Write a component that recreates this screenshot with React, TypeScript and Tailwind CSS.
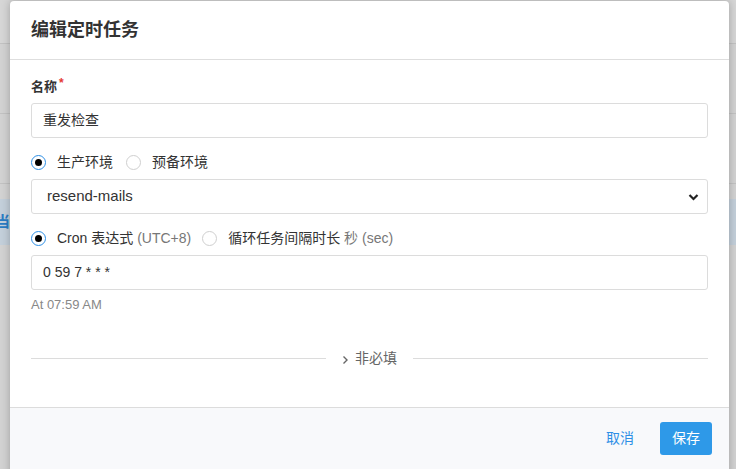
import React from "react";

const font = { fontFamily: '"Liberation Sans", "Noto Sans CJK SC", sans-serif' };

// little radio, checked ones get a blue ring and black dot
const Radio = ({ checked, label }: { checked?: boolean; label: React.ReactNode }) => (
  <label className="flex items-center h-5">
    <span
      className={`flex items-center justify-center w-[15px] h-[15px] rounded-full border bg-white ${
        checked ? "border-[#2d8fe6]" : "border-[#cfcfcf]"
      }`}
    >
      {checked && <span className="w-[7px] h-[7px] rounded-full bg-black" />}
    </span>
    <span className="ml-[11px] text-[14px] text-[#333]">{label}</span>
  </label>
);

const App = () => {
  return (
    <div className="relative w-[736px] h-[469px] overflow-hidden bg-[#d2d2d2]" style={font}>
      {/* page behind the overlay */}
      <div className="flex flex-col">
        <div className="h-[44px] border-b border-[#c2c2c2] bg-[#d6d6d6]" />
        <div className="h-[70px] border-b border-[#c2c2c2]" />
        <div className="h-[70px] border-b border-[#c2c2c2]" />
        <div className="h-[15px]" />
        <div className="h-[46px] bg-[#c3cfda] flex items-center text-[15px] text-[#2a7cc4] font-bold">
          <span className="-ml-[5px]">当</span>
        </div>
      </div>

      {/* modal */}
      <div className="absolute left-[10px] top-[1px] w-[719px] h-[480px] bg-white rounded-[4px] shadow-[0_0_8px_rgba(0,0,0,0.25)] flex flex-col">
        <div className="h-[59px] flex items-center px-[21px] border-b border-[#dedede]">
          <h2 className="text-[18px] font-bold text-[#333]">编辑定时任务</h2>
        </div>

        <div className="px-[21px] pt-[17px] pb-[38px]">
          <div className="h-5 flex items-center text-[13px] font-semibold text-[#333]">
            名称<span className="text-[#e53935] text-[12px] -mt-[8px] ml-[2px]">*</span>
          </div>
          <div className="mt-[6px] h-[35px] flex items-center px-[11px] border border-[#dcdcdc] rounded-[3px] text-[14px] text-[#333]">
            重发检查
          </div>

          <div className="mt-[14px] flex items-center gap-[13px]">
            <Radio checked label="生产环境" />
            <Radio label="预备环境" />
          </div>
          <div className="mt-[7px] h-[35px] flex items-center justify-between pl-[15px] pr-[8px] border border-[#dcdcdc] rounded-[3px] text-[15px] text-[#333]">
            <span>resend-mails</span>
            <svg width="11" height="8" viewBox="0 0 11 8" fill="none">
              <path d="M1.5 2 L5.5 6 L9.5 2" stroke="#222" strokeWidth="2.2" />
            </svg>
          </div>

          <div className="mt-[14px] flex items-center gap-[11px]">
            <Radio
              checked
              label={
                <>
                  Cron 表达式 <span className="text-[#777]">(UTC+8)</span>
                </>
              }
            />
            <Radio
              label={
                <>
                  循环任务间隔时长 <span className="text-[#777]">秒 (sec)</span>
                </>
              }
            />
          </div>
          <div className="mt-[7px] h-[35px] flex items-center px-[11px] border border-[#dcdcdc] rounded-[3px] text-[14px] text-[#333]">
            0 59 7 * * *
          </div>
          <div className="mt-[6px] h-[18px] flex items-center text-[13px] text-[#888]">At 07:59 AM</div>

          <div className="mt-[34px] flex items-center">
            <div className="flex-1 border-t border-[#dcdcdc]" />
            <div className="mx-[16px] flex items-center text-[14px] text-[#666]">
              <svg width="7" height="10" viewBox="0 0 7 10" fill="none" className="mr-[6px] mt-[2px]">
                <path d="M1.5 1.5 L5 5 L1.5 8.5" stroke="#666" strokeWidth="1.4" />
              </svg>
              非必填
            </div>
            <div className="flex-1 border-t border-[#dcdcdc]" />
          </div>
        </div>

        <div className="flex-1 bg-[#f8f9fb] border-t border-[#dcdcdc] flex items-start justify-end pt-[14px] pr-[17px] gap-[26px]">
          <button className="h-[33px] text-[14px] text-[#2d8fe6]">取消</button>
          <button className="h-[33px] px-[12px] rounded-[3px] bg-[#2e99e8] text-white text-[14px]">保存</button>
        </div>
      </div>
    </div>
  );
};

export default App;
